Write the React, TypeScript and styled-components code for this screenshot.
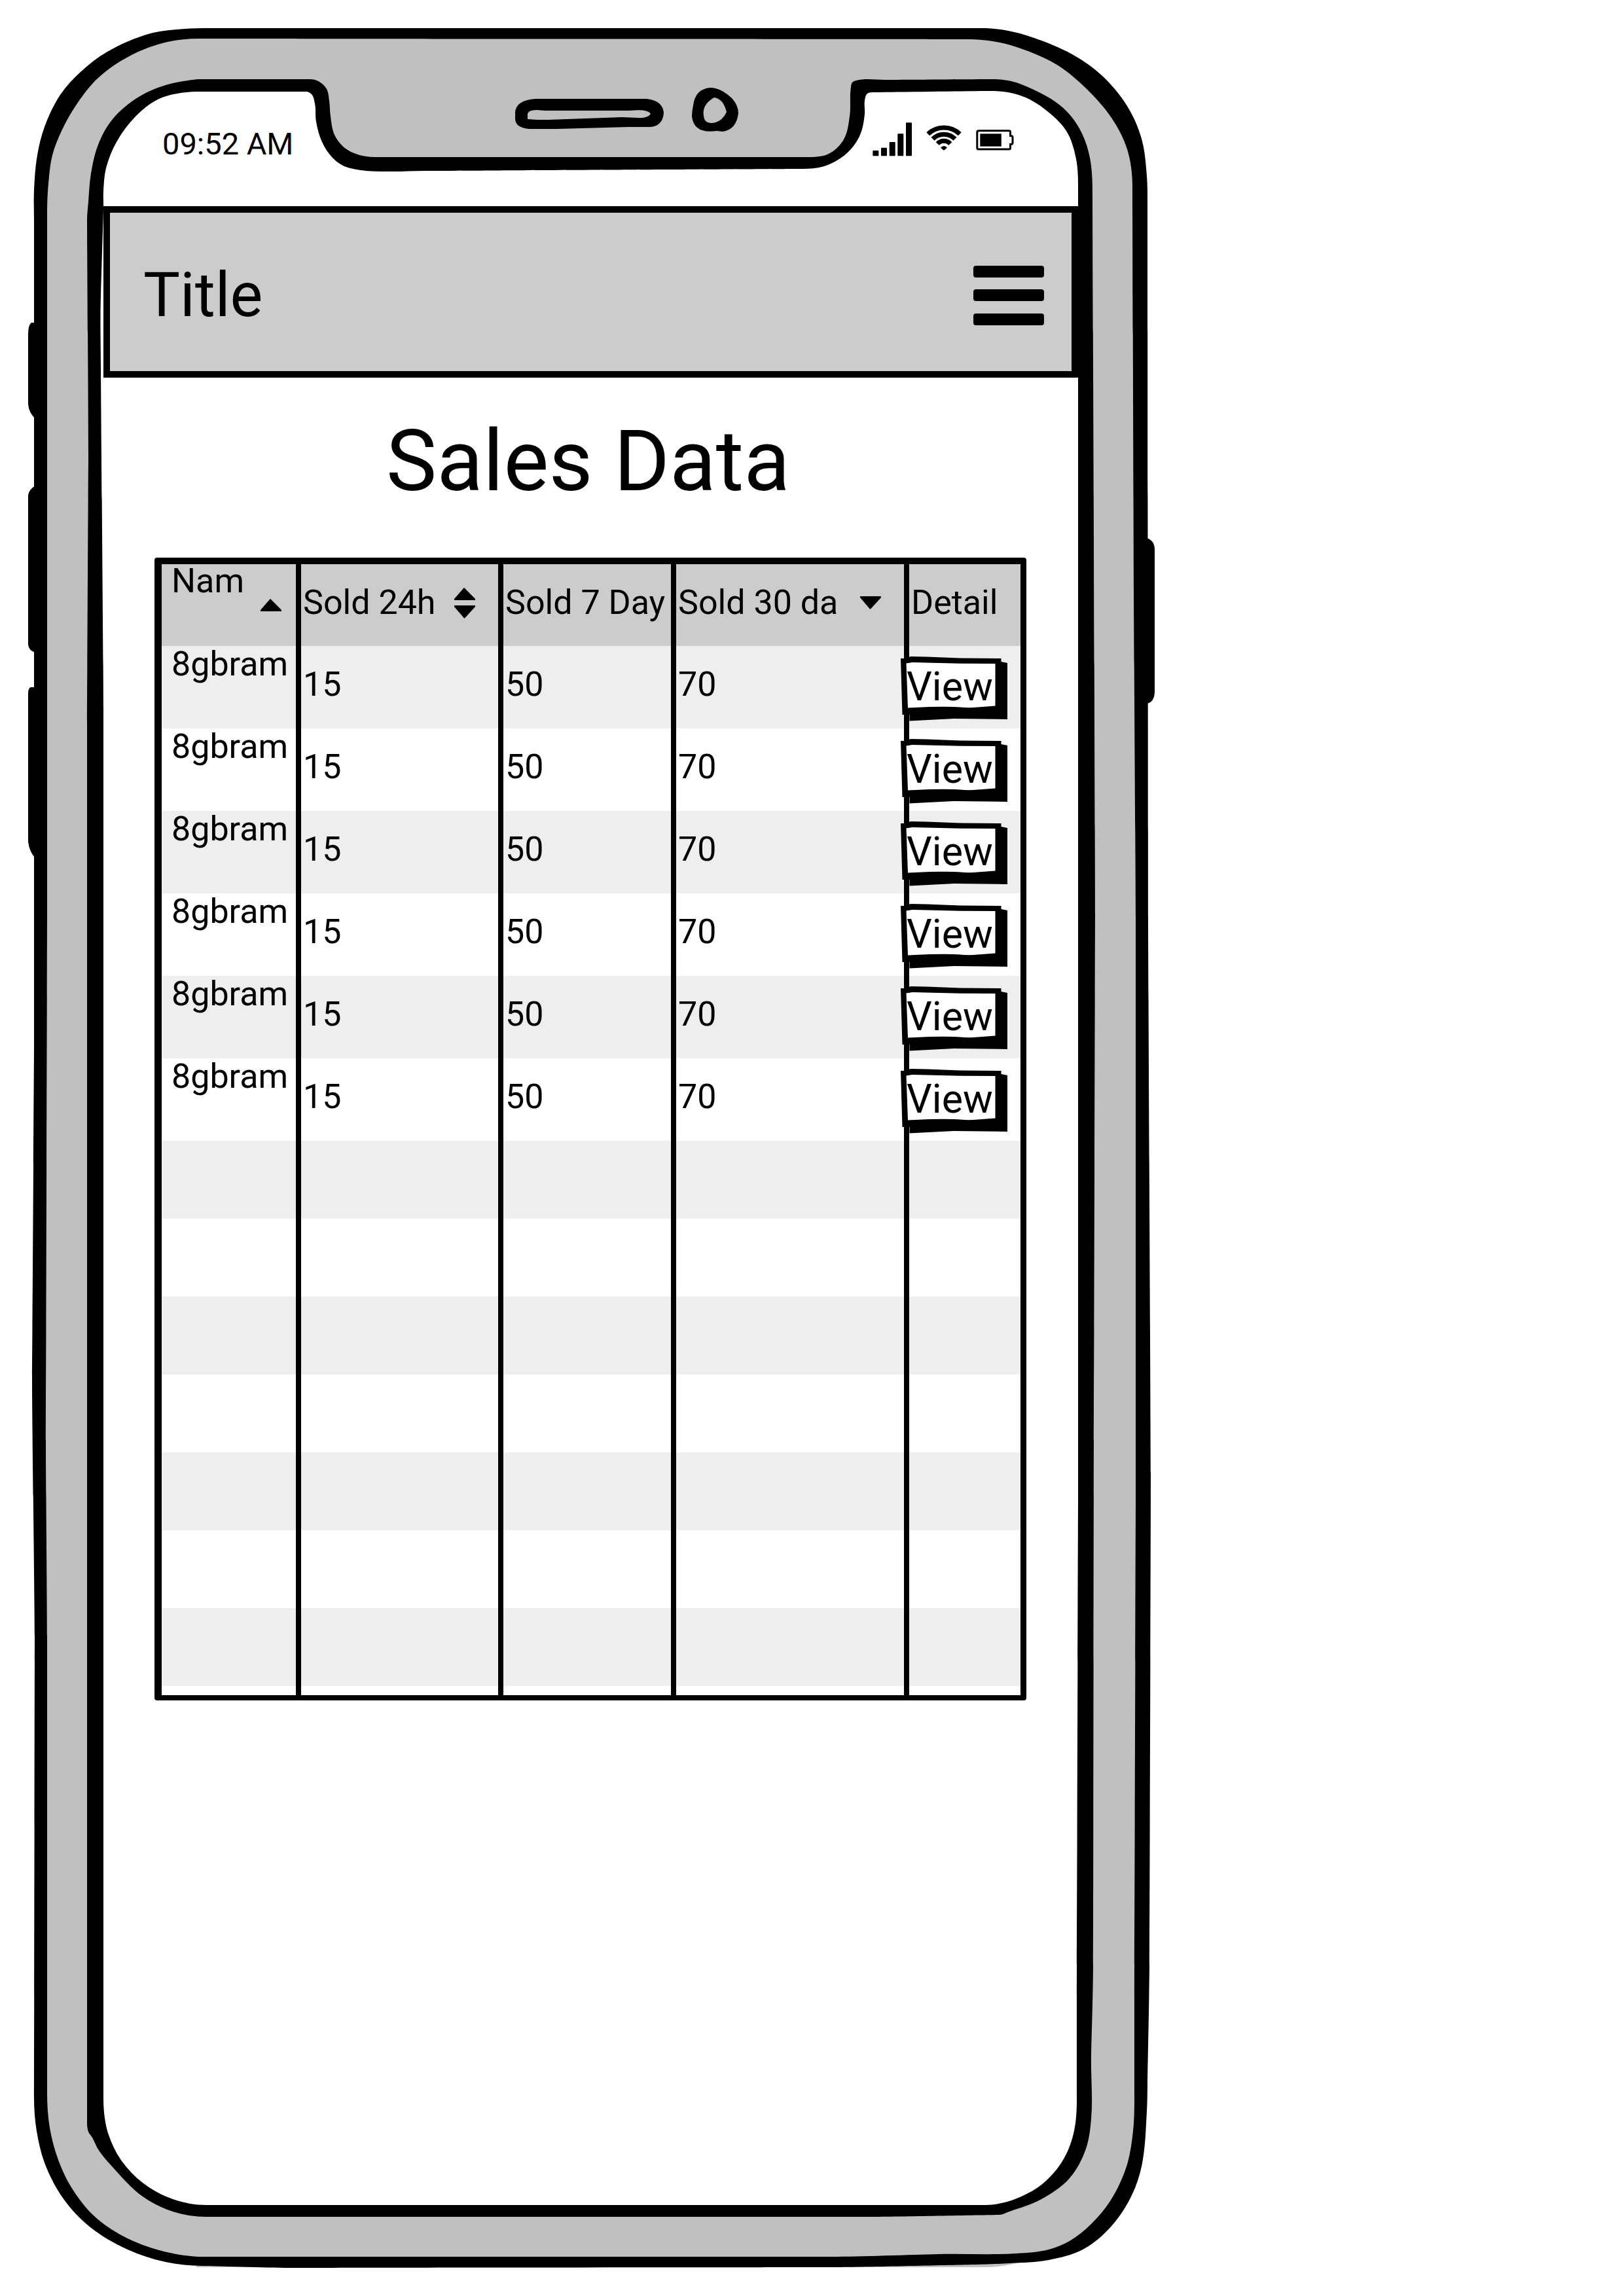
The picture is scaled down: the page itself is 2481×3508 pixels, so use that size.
import React from 'react';
import styled, { createGlobalStyle } from 'styled-components';

const INK = '#000';
const BODY = '#c0c0c0';
const BAR = '#ccc';
const STRIPE = '#eee';

const GlobalStyle = createGlobalStyle`
  *, *::before, *::after { box-sizing: border-box; }
  body {
    margin: 0;
    background: #fff;
    color: ${INK};
    font-family: Roboto, "Liberation Sans", sans-serif;
  }
`;

type Point = [number, number];

/* Joins points into a closed hand-drawn outline: long runs stay straight, short ones are rounded. */
function outline(points: Point[]): string {
  const n = points.length;
  const at = (i: number) => points[(i + n) % n];
  const seg = (i: number) => {
    const [ax, ay] = at(i);
    const [bx, by] = at(i + 1);
    const len = Math.hypot(bx - ax, by - ay) || 1;
    return { len, x: (bx - ax) / len, y: (by - ay) / len };
  };
  const tangent = (i: number) => {
    const before = seg(i - 1);
    const after = seg(i);
    if (before.len > 120 && before.len >= after.len) return before;
    if (after.len > 120) return after;
    const x = before.x + after.x;
    const y = before.y + after.y;
    const len = Math.hypot(x, y) || 1;
    return { len, x: x / len, y: y / len };
  };
  let d = `M${points[0][0]} ${points[0][1]}`;
  for (let i = 0; i < n; i += 1) {
    const a = at(i);
    const b = at(i + 1);
    const reach = Math.min(seg(i).len / 3, 40);
    const ta = tangent(i);
    const tb = tangent(i + 1);
    d += `C${a[0] + ta.x * reach} ${a[1] + ta.y * reach} ${b[0] - tb.x * reach} ${b[1] - tb.y * reach} ${b[0]} ${b[1]}`;
  }
  return `${d}Z`;
}

const shell: Point[] = [
  [52, 338], [52, 290], [57, 237], [68, 194], [92, 145], [123, 110], [164, 79], [230, 51], [270, 45], [310, 43],
  [1500, 43], [1540, 47], [1577, 57], [1638, 83], [1683, 115], [1722, 162], [1744, 212], [1752, 269], [1753, 310],
  [1754, 1400], [1758, 2250], [1756, 3000], [1753, 3185], [1752, 3226], [1744, 3310], [1729, 3354], [1699, 3400],
  [1656, 3436], [1602, 3453], [1542, 3458], [1488, 3460], [1271, 3464], [453, 3465], [310, 3462], [253, 3456],
  [195, 3437], [138, 3403], [98, 3361], [69, 3307], [56, 3256], [52, 3205], [53, 2500], [49, 2100], [52, 1600],
];

const casing: Point[] = [
  [72, 325], [74, 280], [80, 237], [95, 198], [118, 158], [150, 119], [201, 84], [256, 64], [304, 59],
  [1470, 60], [1510, 62], [1547, 70], [1613, 98], [1656, 132], [1698, 180], [1722, 228], [1730, 285],
  [1732, 900], [1735, 1400], [1735, 2300], [1733, 3000], [1733, 3205], [1731, 3256], [1721, 3310], [1696, 3363],
  [1667, 3398], [1634, 3424], [1602, 3437], [1553, 3443], [1434, 3444], [1271, 3448], [310, 3448], [247, 3439],
  [189, 3417], [143, 3385], [109, 3342], [89, 3300], [76, 3251], [72, 3198], [72, 2500], [70, 2200], [72, 1400],
];

const bezel: Point[] = [
  [133, 337], [135, 308], [139, 265], [150, 221], [172, 182], [212, 148], [253, 130], [287, 123], [304, 121],
  [474, 121], [488, 125], [499, 136], [503, 154], [505, 178], [511, 206], [528, 227], [554, 238], [583, 240],
  [1232, 240], [1266, 235], [1289, 213], [1298, 178], [1300, 133], [1302, 126], [1308, 123], [1353, 122], [1513, 121],
  [1545, 124], [1577, 136], [1613, 156], [1635, 176], [1653, 204], [1665, 241], [1669, 295],
  [1671, 820], [1673, 1400], [1671, 2200], [1670, 3000], [1667, 3140], [1667, 3237], [1659, 3283], [1634, 3328],
  [1591, 3360], [1542, 3379], [1526, 3384], [1325, 3387], [315, 3387], [264, 3379], [218, 3356], [172, 3311],
  [150, 3284], [141, 3266], [135, 3257], [133, 3243], [133, 1100], [135, 700],
];

const glass: Point[] = [
  [158, 320], [158, 292], [162, 257], [178, 217], [207, 178], [241, 152], [276, 142], [310, 140], [468, 140],
  [476, 144], [481, 158], [483, 186], [492, 217], [508, 241], [524, 253], [551, 260], [594, 262], [649, 261],
  [1026, 259], [1226, 258], [1262, 253], [1295, 233], [1314, 206], [1321, 174], [1321, 154], [1325, 143],
  [1335, 141], [1507, 139], [1540, 141], [1567, 149], [1595, 166], [1629, 200], [1644, 243], [1647, 295],
  [1647, 2300], [1645, 3000], [1645, 3207], [1640, 3260], [1623, 3302], [1591, 3338], [1553, 3359], [1520, 3368],
  [1490, 3369], [315, 3369], [264, 3360], [218, 3335], [184, 3299], [166, 3262], [160, 3236], [158, 3205],
  [158, 1080], [154, 560], [154, 450],
];

const Page = styled.main`
  padding: 43px;
`;

const Phone = styled.div`
  position: relative;
  width: 1722px;
  max-width: 100%;
  min-height: 3422px;
  padding: 96px 118px 96px 115px;
`;

const Frame = styled.svg`
  position: absolute;
  inset: 0;
  width: 100%;
  height: 100%;
  overflow: visible;
`;

const Screen = styled.div`
  position: relative;
  display: flex;
  flex-direction: column;
`;

const StatusBar = styled.div`
  display: flex;
  justify-content: space-between;
  align-items: flex-start;
  height: 176px;
  padding: 48px 98px 0 90px;
`;

const Clock = styled.time`
  font-size: 47px;
  line-height: 66px;
`;

const Indicators = styled.div`
  display: flex;
  gap: 22px;
`;

const TitleBar = styled.header`
  display: flex;
  justify-content: space-between;
  align-items: center;
  height: 262px;
  padding: 10px 42px 0 51px;
  border: 10px solid ${INK};
  background: ${BAR};
`;

const AppTitle = styled.span`
  font-size: 94px;
  line-height: 120px;
`;

const MenuButton = styled.button`
  display: flex;
  padding: 0;
  border: 0;
  background: none;
`;

const Heading = styled.h1`
  margin: 53px 0 72px;
  padding-right: 8px;
  font-size: 130px;
  font-weight: 400;
  line-height: 150px;
  text-align: center;
`;

const Sheet = styled.section`
  margin: 0 79px 0 78px;
  border: solid ${INK};
  border-width: 10px 9px 8px 11px;
  border-radius: 4px;
`;

const Table = styled.table`
  width: 100%;
  border-spacing: 0;
  table-layout: fixed;
  font-size: 52px;
  line-height: 56px;
`;

const Col = styled.col<{ $width?: number }>`
  width: ${({ $width }) => ($width ? `${$width}px` : 'auto')};
`;

const HeadRow = styled.tr`
  height: 125px;
  background: ${BAR};
`;

const Row = styled.tr<{ $height?: number }>`
  height: ${({ $height = 126 }) => $height}px;
  &:nth-child(odd) {
    background: ${STRIPE};
  }
`;

const HeadCell = styled.th`
  padding: 0 0 8px 3px;
  border-left: 8px solid ${INK};
  font-weight: 400;
  text-align: left;
  white-space: nowrap;
  &:first-child {
    padding: 0 0 0 15px;
    border-left: 0;
    vertical-align: top;
  }
`;

const HeadLabel = styled.div<{ $stacked?: boolean }>`
  display: flex;
  flex-direction: ${({ $stacked }) => ($stacked ? 'column' : 'row')};
  justify-content: space-between;
  align-items: ${({ $stacked }) => ($stacked ? 'stretch' : 'center')};
  line-height: ${({ $stacked }) => ($stacked ? 52 : 56)}px;
`;

const SortButton = styled.button<{ $end: number }>`
  display: flex;
  justify-content: flex-end;
  padding: 0 ${({ $end }) => $end}px 0 0;
  border: 0;
  background: none;
`;

const Cell = styled.td`
  padding: 0 0 8px 3px;
  border-left: 8px solid ${INK};
  &:first-child {
    padding: 0 0 0 15px;
    border-left: 0;
    vertical-align: top;
  }
`;

const ActionCell = styled(Cell)`
  padding: 16px 0 0;
  vertical-align: top;
`;

const ViewButton = styled.button`
  position: relative;
  display: block;
  width: 164px;
  height: 99px;
  margin-left: -13px;
  padding: 0 0 8px 9px;
  border: 0;
  background: none;
  color: inherit;
  font: inherit;
  font-size: 61px;
  text-align: left;
`;

const ButtonShape = styled.svg`
  position: absolute;
  top: 0;
  left: 0;
`;

const ButtonText = styled.span`
  position: relative;
`;

function PhoneFrame() {
  return (
    <Frame viewBox="43 43 1722 3422" preserveAspectRatio="none" aria-hidden="true">
      <path d="M54 493H48Q43 496 43 512V618Q44 630 54 640Z" />
      <path d="M54 742Q44 748 43 757V985Q44 994 54 997Z" />
      <path d="M54 1050H47Q43 1051 43 1060V1286Q45 1302 54 1311Z" />
      <path d="M1752 822Q1764 826 1764 840V1058Q1763 1073 1752 1075Z" />
      <path d="M300 3459V3464H1510Q1545 3462 1570 3453Z" fill={BODY} />
      <path d={outline(shell)} />
      <path d={outline(casing)} fill={BODY} />
      <path d={outline(bezel)} />
      <path d={outline(glass)} fill="#fff" />
      <path d="M818 151H988Q1013 154 1014 173Q1012 193 993 194H960L850 197H808Q787 195 787 181V171Q789 153 818 151Z" />
      <path d="M806 182V174Q807 168 820 168L832 169H962Q990 166 994 174Q989 181 975 180L950 179L838 183H820Z" fill={BODY} />
      <path d="M1085 134Q1101 134 1118 150Q1128 161 1128 173Q1125 198 1104 201L1095 200Q1060 205 1057 178Q1057 170 1059 161Q1062 136 1085 134Z" />
      <path d="M1091 149Q1105 151 1110 171Q1102 188 1086 188Q1076 188 1075 177Q1072 160 1091 149Z" fill={BODY} />
    </Frame>
  );
}

function SignalIcon() {
  return (
    <svg width="60" height="52" viewBox="0 0 60 52" role="img" aria-label="Signal">
      <rect x="0.3" y="43" width="9" height="8.3" rx="1" />
      <rect x="13" y="38.7" width="9" height="12.6" rx="1" />
      <rect x="25.7" y="30" width="9" height="21.3" rx="1" />
      <rect x="38.3" y="17.3" width="9" height="34" rx="1" />
      <rect x="51" y="0.3" width="9" height="51" rx="1" />
    </svg>
  );
}

function WifiIcon() {
  return (
    <svg width="54" height="52" viewBox="0 0 54 52" role="img" aria-label="Wi-Fi">
      <g fill="none" stroke={INK} strokeWidth="7">
        <path d="M2.7 17.7A35 35 0 0 1 51.3 17.7" />
        <path d="M10 25.3A24 24 0 0 1 44 25.3" />
        <path d="M17.3 32.7A13 13 0 0 1 36.7 32.7" />
      </g>
      <path d="M22 38.5Q27 33.5 32 38.5L28.5 41.8Q27 43 25.5 41.8Z" />
    </svg>
  );
}

function BatteryIcon() {
  return (
    <svg width="58" height="52" viewBox="0 0 58 52" role="img" aria-label="Battery">
      <path
        d="M4 12.8H50.5Q52.5 12.8 52.5 15V20.5H53.5Q56 20.5 56 23V31Q56 33.5 53.5 33.5H52.5V39Q52.5 41 50.5 41H4Q1.8 41 1.8 39V15Q1.8 12.8 4 12.8Z"
        fill="none"
        stroke={INK}
        strokeWidth="3"
      />
      <rect x="6.3" y="17.3" width="32.5" height="19.4" />
    </svg>
  );
}

function MenuIcon() {
  return (
    <svg width="108" height="91" viewBox="0 0 108 91">
      <rect width="108" height="18" rx="4" />
      <rect y="36" width="108" height="18" rx="4" />
      <rect y="73" width="108" height="18" rx="4" />
    </svg>
  );
}

type Sort = 'up' | 'down' | 'both';

function SortIcon({ sort }: { sort: Sort }) {
  const up = 'M16.2 1L33 18V20H1V18L15.8 1Z';
  const down = 'M1 0H33V2L17 19.5H16L1 2Z';
  if (sort === 'both') {
    return (
      <svg width="34" height="48" viewBox="0 0 34 48">
        <path d={up} />
        <path d={down} transform="translate(0 28)" />
      </svg>
    );
  }
  return (
    <svg width="34" height="20" viewBox="0 0 34 20">
      <path d={sort === 'up' ? up : down} />
    </svg>
  );
}

interface Column {
  label: string;
  width?: number;
  sort?: Sort;
  stacked?: boolean;
}

const columns: Column[] = [
  { label: 'Nam', width: 205, sort: 'up', stacked: true },
  { label: 'Sold 24h', width: 309, sort: 'both' },
  { label: 'Sold 7 Day', width: 264 },
  { label: 'Sold 30 da', width: 356, sort: 'down' },
  { label: 'Detail' },
];

const products = Array.from({ length: 6 }, () => ({ name: '8gbram', day: 15, week: 50, month: 70 }));

/* Blank rows that fill the sheet; the last one is cut off by its lower edge. */
const blankRows = [119, 119, 119, 119, 119, 119, 119, 14];

function ViewAction() {
  return (
    <ViewButton type="button">
      <ButtonShape width="164" height="99" viewBox="0 0 164 99" aria-hidden="true">
        <path d="M0 3H8L15 0L40 .5L91 2.5L153.500 3V8L163 10V96L81 95L13.500 98.500V89H2.500Z" />
        <path d="M8.500 10.500L18 9L91 10.700L144.500 11V75.500L111 78Q101 78.500 91 77.500T44 77L11 78.500Z" fill="#fff" />
      </ButtonShape>
      <ButtonText>View</ButtonText>
    </ViewButton>
  );
}

export default function App() {
  return (
    <Page>
      <GlobalStyle />
      <Phone>
        <PhoneFrame />
        <Screen>
          <StatusBar>
            <Clock dateTime="09:52">09:52 AM</Clock>
            <Indicators>
              <SignalIcon />
              <WifiIcon />
              <BatteryIcon />
            </Indicators>
          </StatusBar>
          <TitleBar>
            <AppTitle>Title</AppTitle>
            <MenuButton type="button" aria-label="Menu">
              <MenuIcon />
            </MenuButton>
          </TitleBar>
          <Heading>Sales Data</Heading>
          <Sheet>
            <Table>
              <colgroup>
                {columns.map((c) => (
                  <Col key={c.label} $width={c.width} />
                ))}
              </colgroup>
              <thead>
                <HeadRow>
                  {columns.map((c) => (
                    <HeadCell key={c.label} scope="col">
                      <HeadLabel $stacked={c.stacked}>
                        {c.label}
                        {c.sort && (
                          <SortButton type="button" aria-label={`Sort by ${c.label}`} $end={c.stacked ? 21 : 34}>
                            <SortIcon sort={c.sort} />
                          </SortButton>
                        )}
                      </HeadLabel>
                    </HeadCell>
                  ))}
                </HeadRow>
              </thead>
              <tbody>
                {products.map((p, i) => (
                  <Row key={i}>
                    <Cell>{p.name}</Cell>
                    <Cell>{p.day}</Cell>
                    <Cell>{p.week}</Cell>
                    <Cell>{p.month}</Cell>
                    <ActionCell>
                      <ViewAction />
                    </ActionCell>
                  </Row>
                ))}
                {blankRows.map((height, i) => (
                  <Row key={`blank-${i}`} $height={height}>
                    {columns.map((c) => (
                      <Cell key={c.label} />
                    ))}
                  </Row>
                ))}
              </tbody>
            </Table>
          </Sheet>
        </Screen>
      </Phone>
    </Page>
  );
}
